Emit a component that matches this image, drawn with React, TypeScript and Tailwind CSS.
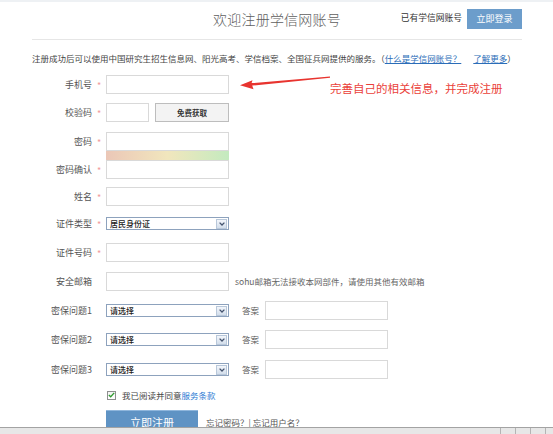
import React from "react";

const cjk = "font-['Noto_Sans_CJK_SC','Noto_Sans',sans-serif]";

function Row({
  label,
  required,
  className,
  children,
}: {
  label?: string;
  required?: boolean;
  className?: string;
  children?: React.ReactNode;
}) {
  return (
    <div className={`flex h-[19px] items-center ${className ?? ""}`}>
      <div className="w-[60px] text-right text-[9px] leading-none text-[#555]">{label}</div>
      <div className="w-[14px] pt-[2px] text-center text-[9px] leading-none text-[#f29a9a]">
        {required ? "*" : ""}
      </div>
      {children}
    </div>
  );
}

function TextBox({ w = "w-[123px]" }: { w?: string }) {
  return <input type="text" className={`h-[19px] ${w} border border-[#d9d9d9] bg-white outline-none`} />;
}

function FakeSelect({ text }: { text: string }) {
  return (
    <div className="flex h-[13px] w-[123px] items-center border border-[#8da2bd] bg-white">
      <span className="flex-1 pl-[3px] text-[8px] font-medium leading-none text-[#222]">{text}</span>
      <span className="mr-[1px] flex h-[10px] w-[11px] items-center justify-center border border-[#b9c8da] bg-gradient-to-b from-[#f3f6fb] to-[#d3deeb]">
        <svg width="6" height="4" viewBox="0 0 6 4">
          <path d="M0.6 0.6 L3 3 L5.4 0.6" stroke="#44536e" strokeWidth="1.3" fill="none" />
        </svg>
      </span>
    </div>
  );
}

function QuestionRow({ n, className }: { n: number; className?: string }) {
  return (
    <Row label={`密保问题${n}`} className={className}>
      <FakeSelect text="请选择" />
      <span className="ml-[13px] w-[23px] text-[8.5px] leading-none text-[#555]">答案</span>
      <TextBox />
    </Row>
  );
}

export default function App() {
  return (
    <div className={`flex h-[434px] w-full flex-col overflow-hidden bg-white ${cjk}`}>
      <div className="relative h-[427px] overflow-hidden">
        <div className="h-[2px] bg-[#eef1f4]" />
        <div className="pl-[32px] pr-[31px]">
          {/* header */}
          <div className="grid h-[38px] grid-cols-[1fr_auto_1fr] items-center border-b border-[#e6e6e6] pb-[4px]">
            <div />
            <h1 className="text-[14px] font-light leading-none tracking-[0.2px] text-[#5e5e5e]">欢迎注册学信网账号</h1>
            <div className="flex items-center justify-end">
              <span className="text-[8.75px] leading-none text-[#333]">已有学信网账号</span>
              <button className="ml-[5px] h-[20px] w-[55px] bg-[#6c9dcb] text-[9px] leading-none text-white">
                立即登录
              </button>
            </div>
          </div>

          {/* intro */}
          <p className="mt-[12px] h-[12px] whitespace-nowrap text-[8.5px] leading-[12px] text-[#444]">
            注册成功后可以使用中国研究生招生信息网、阳光高考、学信档案、全国征兵网提供的服务。（
            <a className="text-[#2b6db8] underline">什么是学信网账号？</a>
            <span className="inline-block w-[12px]" />
            <a className="text-[#2b6db8] underline">了解更多</a>）
          </p>

          {/* form */}
          <div className="mt-[11px] flex flex-col">
            <Row label="手机号" required>
              <TextBox />
            </Row>
            <Row label="校验码" required className="mt-[9px]">
              <TextBox w="w-[43px]" />
              <button className="ml-[6px] h-[19px] w-[74px] border border-[#bdbdbd] bg-[#f3f3f3] text-[7.5px] font-bold leading-none text-[#333]">
                免费获取
              </button>
            </Row>
            <Row label="密码" required className="mt-[10px]">
              <TextBox />
            </Row>
            <div className="flex h-[9px]">
              <div className="ml-[74px] w-[123px] bg-gradient-to-r from-[#ebc7b7] via-[#f1e6bd] to-[#c3eabf]" />
            </div>
            <Row label="密码确认" required>
              <TextBox />
            </Row>
            <Row label="姓名" required className="mt-[8px]">
              <TextBox />
            </Row>
            <Row label="证件类型" required className="mt-[8px]">
              <FakeSelect text="居民身份证" />
            </Row>
            <Row label="证件号码" required className="mt-[10px]">
              <TextBox />
            </Row>
            <Row label="安全邮箱" className="mt-[10px]">
              <TextBox />
              <span className="ml-[6px] whitespace-nowrap text-[8.5px] leading-none text-[#666]">
                sohu邮箱无法接收本网部件，请使用其他有效邮箱
              </span>
            </Row>
            <QuestionRow n={1} className="mt-[10px]" />
            <QuestionRow n={2} className="mt-[10px]" />
            <QuestionRow n={3} className="mt-[11px]" />

            <div className="mt-[7px] flex h-[18px] items-center pl-[75px]">
              <span className="flex h-[9px] w-[9px] items-center justify-center border border-[#8e8f8f] bg-gradient-to-b from-[#f4f4f4] to-white">
                <svg width="7" height="6" viewBox="0 0 7 6">
                  <path d="M0.8 3 L2.7 4.8 L6.2 0.9" stroke="#2f9a2f" strokeWidth="1.3" fill="none" />
                </svg>
              </span>
              <span className="ml-[6px] text-[8.5px] leading-none text-[#444]">
                我已阅读并同意<a className="text-[#2d7bd4]">服务条款</a>
              </span>
            </div>

            <div className="mt-[6px] flex items-center pl-[74px]">
              <button className="h-[24px] w-[92px] border-t border-[#8fb6dc] bg-[#5f93c4] text-[11px] leading-none text-white">
                立即注册
              </button>
              <span className="ml-[8px] text-[8.5px] leading-none text-[#555]">忘记密码？| 忘记用户名？</span>
            </div>
          </div>
        </div>

        {/* annotation */}
        <svg className="absolute left-[236px] top-[72px]" width="100" height="22" viewBox="0 0 100 22">
          <polygon
            points="4,13.2 16.5,8.2 15.6,11.1 94,4.4 94,5.8 16.2,13.6 17.5,17.2"
            fill="#e8342f"
          />
        </svg>
        <span className="absolute left-[330px] top-[82px] whitespace-nowrap text-[11.5px] leading-[13px] text-[#ea3f3a]">
          完善自己的相关信息，并完成注册
        </span>
      </div>

      {/* status bar */}
      <div className="flex h-[7px] justify-end gap-[14px] border-t border-[#a3a3a3] bg-[#e7e7e7] pr-[7px]">
        <div className="w-px bg-[#b4b4b4]" />
        <div className="w-px bg-[#b4b4b4]" />
        <div className="w-px bg-[#b4b4b4]" />
        <div className="w-px bg-[#b4b4b4]" />
      </div>
    </div>
  );
}
